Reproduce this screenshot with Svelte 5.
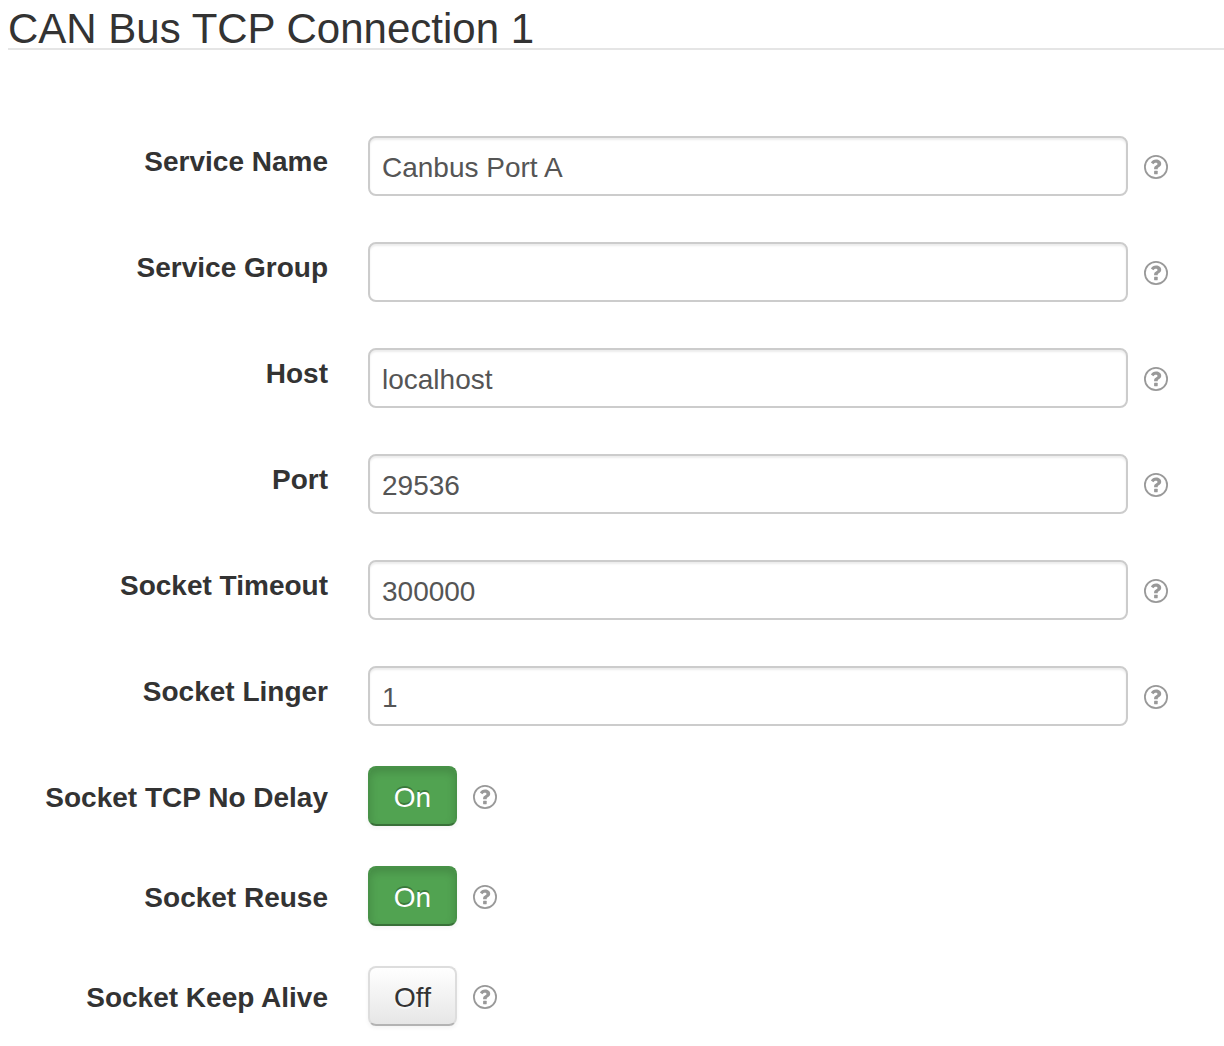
<script>
  let fields = $state([
    { id: 'service-name', label: 'Service Name', value: 'Canbus Port A' },
    { id: 'service-group', label: 'Service Group', value: '' },
    { id: 'host', label: 'Host', value: 'localhost' },
    { id: 'port', label: 'Port', value: '29536' },
    { id: 'socket-timeout', label: 'Socket Timeout', value: '300000' },
    { id: 'socket-linger', label: 'Socket Linger', value: '1' }
  ]);

  let toggles = $state([
    { id: 'tcp-no-delay', label: 'Socket TCP No Delay', on: true },
    { id: 'socket-reuse', label: 'Socket Reuse', on: true },
    { id: 'keep-alive', label: 'Socket Keep Alive', on: false }
  ]);
</script>

{#snippet help(label)}
  <button type="button" class="help" aria-label={`Help: ${label}`}>
    <svg viewBox="0 0 24 24" width="24" height="24" aria-hidden="true">
      <circle cx="12" cy="12" r="11.1" fill="none" stroke="#999" stroke-width="1.8" />
      <path d="M6.9 7.6C8 5.6 9.7 4.6 12.1 4.6c2.9 0 5.1 1.7 5.1 4.2 0 1.7-.9 2.7-2.3 3.5-.9.5-1.2.9-1.2 1.6v.4h-3.6v-.7c0-1.7.8-2.6 2.3-3.4.8-.4 1.1-.8 1.1-1.3 0-.7-.7-1.2-1.6-1.2-1 0-1.6.4-2.5 1.6z" fill="#999" />
      <rect x="10.1" y="15.8" width="3.6" height="3.4" rx="0.4" fill="#999" />
    </svg>
  </button>
{/snippet}

<main>
  <h1>CAN Bus TCP Connection 1</h1>
  <form onsubmit={(e) => e.preventDefault()}>
    {#each fields as field (field.id)}
      <div class="row">
        <label for={field.id}>{field.label}</label>
        <div class="controls text">
          <input id={field.id} type="text" bind:value={field.value} />
          {@render help(field.label)}
        </div>
      </div>
    {/each}
    {#each toggles as toggle (toggle.id)}
      <div class="row">
        <label for={toggle.id}>{toggle.label}</label>
        <div class="controls">
          <button
            id={toggle.id}
            type="button"
            class="toggle"
            class:on={toggle.on}
            aria-pressed={toggle.on}
            onclick={() => (toggle.on = !toggle.on)}
          >{toggle.on ? 'On' : 'Off'}</button>
          {@render help(toggle.label)}
        </div>
      </div>
    {/each}
  </form>
</main>

<style>
  :global(body) {
    background: #fff;
  }
  main {
    padding: 10px 0 20px 8px;
    color: #333;
    font-family: 'Helvetica Neue', 'Liberation Sans', Arial, sans-serif;
    font-size: 28px;
    line-height: 40px;
  }
  h1 {
    margin: 0 0 80px;
    border-bottom: 2px solid #e5e5e5;
    font-size: 42px;
    font-weight: 400;
    line-height: 38px;
  }
  form {
    display: flex;
    flex-direction: column;
    gap: 40px;
    padding-right: 56px;
  }
  .row {
    display: grid;
    grid-template-columns: 320px 1fr;
    column-gap: 40px;
    align-items: start;
  }
  label {
    padding-top: 12px;
    font-weight: 700;
    text-align: right;
  }
  .controls {
    display: flex;
    align-items: center;
    gap: 16px;
  }
  .text {
    padding-top: 6px;
  }
  input {
    box-sizing: border-box;
    flex: 1;
    min-width: 0;
    height: 60px;
    padding: 4px 12px 0;
    border: 2px solid #ccc;
    border-radius: 8px;
    background: #fff;
    box-shadow: inset 0 2px 2px rgba(0, 0, 0, 0.075);
    color: #555;
    font: inherit;
  }
  .toggle {
    box-sizing: border-box;
    width: 89px;
    height: 60px;
    padding: 4px 0 0;
    border: 2px solid #ddd;
    border-bottom-color: #b3b3b3;
    border-radius: 8px;
    background: linear-gradient(#fff, #e6e6e6);
    box-shadow: 0 2px 4px rgba(0, 0, 0, 0.05);
    color: #333;
    font: inherit;
    text-shadow: 0 2px 2px rgba(255, 255, 255, 0.75);
    cursor: pointer;
  }
  .toggle.on {
    border-color: #489248 #489248 #387038;
    background: #51a351;
    box-shadow:
      inset 0 4px 8px rgba(0, 0, 0, 0.15),
      0 2px 4px rgba(0, 0, 0, 0.05);
    color: #fff;
    text-shadow: 0 -2px 0 rgba(0, 0, 0, 0.25);
  }
  .help {
    flex: none;
    padding: 2px 0 0;
    border: 0;
    background: none;
    cursor: pointer;
  }
  .help svg {
    display: block;
  }
</style>
